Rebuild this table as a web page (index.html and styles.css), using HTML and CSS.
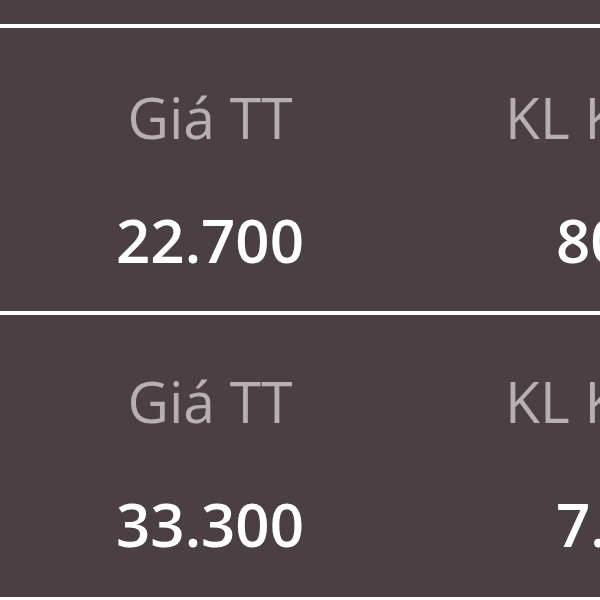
FILE: index.html
```html
<!DOCTYPE html>
<html lang="vi">
<head>
<meta charset="utf-8">
<link rel="stylesheet" href="styles.css">
</head>
<body>
<div class="board">
  <div class="row">
    <div class="cell">
      <div class="label">Giá TT</div>
      <div class="value">22.700</div>
    </div>
    <div class="cell cell-left">
      <div class="label">KL Khớp</div>
      <div class="value">80.000</div>
    </div>
  </div>
  <div class="row">
    <div class="cell">
      <div class="label">Giá TT</div>
      <div class="value">33.300</div>
    </div>
    <div class="cell cell-left">
      <div class="label">KL Khớp</div>
      <div class="value">7.500</div>
    </div>
  </div>
  <div class="row row-next"></div>
</div>
</body>
</html>
```
FILE: styles.css
```css
html, body {
  margin: 0;
  padding: 0;
  background: #4a3f42;
  overflow: hidden;
}
.board {
  padding-top: 24px;
  font-family: "Open Sans", "Noto Sans", sans-serif;
  width: 600px;
  height: 600px;
  box-sizing: border-box;
  overflow: hidden;
}
.row {
  border-top: 4px solid #ffffff;
  height: 287px;
  display: grid;
  grid-template-columns: 408px 408px;
  padding-left: 6px;
  box-sizing: border-box;
  width: 900px;
}
.row + .row {
  height: 286px;
}
.row + .row .cell {
  padding-top: 58px;
}
.cell {
  display: flex;
  flex-direction: column;
  align-items: center;
  padding-top: 61px;
}
.cell-left {
  align-items: flex-start;
  padding-left: 91px;
}
.cell-left .value {
  margin-left: 51px;
}
.label {
  font-size: 57px;
  line-height: 1;
  color: #b7afb0;
  white-space: nowrap;
}
.value {
  margin-top: 64px;
  font-size: 60px;
  line-height: 1;
  font-weight: 600;
  color: #ffffff;
  white-space: nowrap;
}
```
